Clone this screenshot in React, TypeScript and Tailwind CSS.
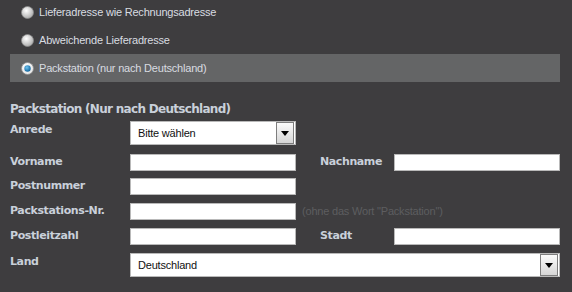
import React from "react";

const labelCls =
  "text-[11px] font-bold text-[#c9d0da] [font-family:'DejaVu_Sans',sans-serif] tracking-[-0.4px]";
const inputCls = "w-[166px] h-[17px] bg-white border border-[#b9b9b9]";
const textCls = "text-[11px] tracking-[-0.2px]";

function Radio({ checked }: { checked?: boolean }) {
  return (
    <svg width="13" height="13" viewBox="0 0 13 13">
      <defs>
        <radialGradient id={checked ? "rgC" : "rgU"} cx="40%" cy="35%" r="70%">
          <stop offset="0%" stopColor="#ffffff" />
          <stop offset="100%" stopColor={checked ? "#e2e2e2" : "#a9a9a9"} />
        </radialGradient>
        <radialGradient id="dot" cx="40%" cy="35%" r="70%">
          <stop offset="0%" stopColor="#6fc3ef" />
          <stop offset="100%" stopColor="#0a5f99" />
        </radialGradient>
      </defs>
      <circle cx="6.5" cy="6.5" r="6" fill={`url(#${checked ? "rgC" : "rgU"})`} stroke="#8c8c8c" strokeWidth="0.8" />
      {checked && <circle cx="6.5" cy="6.5" r="3.2" fill="url(#dot)" />}
    </svg>
  );
}

function Select({ value, width }: { value: string; width: string }) {
  return (
    <div className={`${width} h-[24px] bg-white border border-[#b9b9b9] flex items-center`}>
      <span className={`flex-1 pl-[7px] ${textCls} text-[#111]`}>{value}</span>
      <div className="w-[18px] h-[22px] mr-px border border-[#7e7e7e] bg-gradient-to-b from-[#fbfbfb] to-[#d6d6d6] flex items-center justify-center">
        <svg width="8" height="5" viewBox="0 0 8 5">
          <path d="M0 0h8L4 5z" fill="#000" />
        </svg>
      </div>
    </div>
  );
}

const options = [
  { label: "Lieferadresse wie Rechnungsadresse", checked: false },
  { label: "Abweichende Lieferadresse", checked: false },
  { label: "Packstation (nur nach Deutschland)", checked: true },
];

export default function App() {
  return (
    <div className="w-[572px] h-[292px] bg-[#3e3d3f] overflow-hidden [font-family:'Liberation_Sans',sans-serif]">
      {/* ===== ADDRESS TYPE ===== */}
      <div className="-mt-[2px] pl-[10px] w-[560px]">
        {options.map((o) => (
          <div
            key={o.label}
            className={`h-7 flex items-center gap-[5px] pl-[11px] ${o.checked ? "bg-[#646566]" : ""}`}
          >
            <Radio checked={o.checked} />
            <span className={`${textCls} text-[#d9dce1]`}>{o.label}</span>
          </div>
        ))}
      </div>

      {/* ===== PACKSTATION FORM ===== */}
      <div className="pl-[10px]">
        <div className={`${labelCls} text-[12px] tracking-[-0.7px] mt-[18px] h-[18px] leading-[18px]`}>
          Packstation (Nur nach Deutschland)
        </div>

        <div className="mt-[3px] flex">
          <div className={`${labelCls} w-[120px] leading-[18px]`}>Anrede</div>
          <Select value="Bitte wählen" width="w-[166px]" />
        </div>

        <div className="mt-[9px] flex items-center h-[17px]">
          <div className={`${labelCls} w-[120px]`}>Vorname</div>
          <div className={inputCls} />
          <div className={`${labelCls} w-[74px] ml-[24px]`}>Nachname</div>
          <div className={inputCls} />
        </div>

        <div className="mt-[7px] flex items-center h-[17px]">
          <div className={`${labelCls} w-[120px]`}>Postnummer</div>
          <div className={inputCls} />
        </div>

        <div className="mt-[8px] flex items-center h-[17px]">
          <div className={`${labelCls} w-[120px]`}>Packstations-Nr.</div>
          <div className={inputCls} />
          <span className={`ml-[6px] ${textCls} text-[#5d5d60]`}>(ohne das Wort "Packstation")</span>
        </div>

        <div className="mt-[8px] flex items-center h-[17px]">
          <div className={`${labelCls} w-[120px]`}>Postleitzahl</div>
          <div className={inputCls} />
          <div className={`${labelCls} w-[74px] ml-[24px]`}>Stadt</div>
          <div className={inputCls} />
        </div>

        <div className="mt-[8px] flex">
          <div className={`${labelCls} w-[120px] leading-[18px]`}>Land</div>
          <Select value="Deutschland" width="w-[430px]" />
        </div>
      </div>
    </div>
  );
}
